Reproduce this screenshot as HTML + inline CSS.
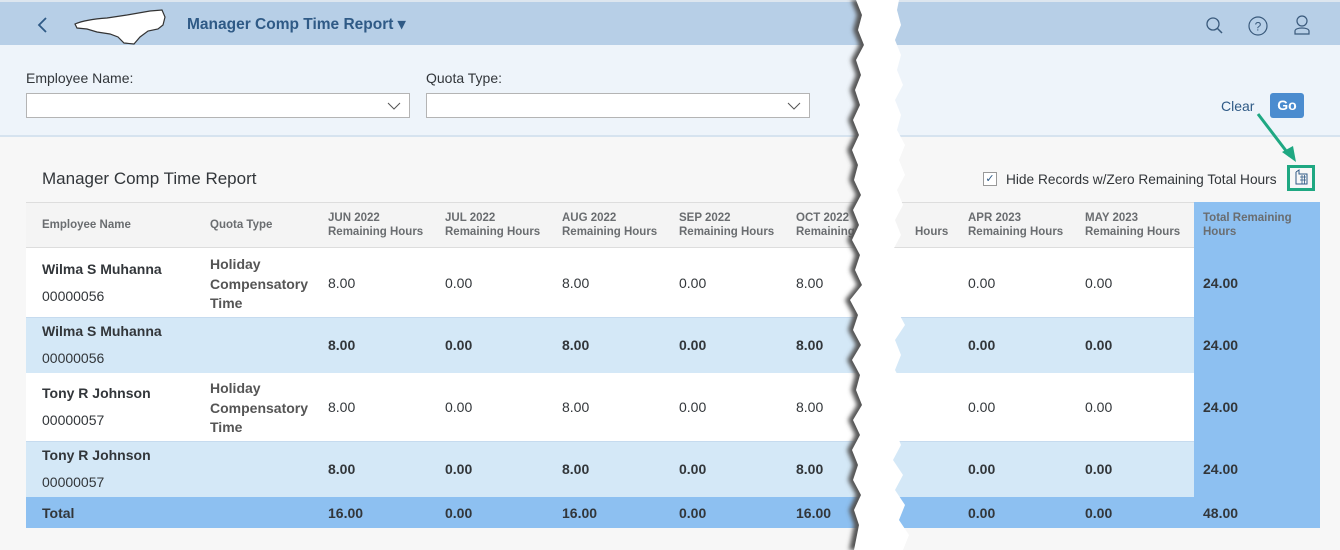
<!DOCTYPE html>
<html><head><meta charset="utf-8"><style>
*{box-sizing:border-box;margin:0;padding:0}
body{width:1340px;height:550px;overflow:hidden;background:#f7f7f7;font-family:"Liberation Sans",sans-serif;position:relative;color:#32363a}
.hdr{position:absolute;left:0;top:0;width:1340px;height:45px;background:#b7cfe7;border-top:2px solid #dde6ef}
.flt{position:absolute;left:0;top:45px;width:1340px;height:92px;background:#eef4fa;border-bottom:2px solid #d6e3ef}
.lbl{position:absolute;font-size:14px;color:#32363a}
.inp{position:absolute;height:25px;background:#fff;border:1px solid #b4b4b4}
.t{position:absolute;font-size:14px}
.b{font-weight:bold}
.h{position:absolute;font-size:11.5px;font-weight:bold;color:#6a6d70;line-height:14px}
.row{position:absolute;left:26px;width:1294px}
</style></head><body>
<div class="hdr">
<svg style="position:absolute;left:36px;top:14px" width="14" height="18"><path d="M10 2 L3 9 L10 16" stroke="#2f5a86" stroke-width="1.8" fill="none"/></svg>
<svg style="position:absolute;left:72px;top:5px" width="95" height="40"><path d="M3 17 C10 14 20 12 35 11 L55 8 L78 4 L90 3 L93 10 L91 18 L86 22 L76 24 L68 30 L62 37 L52 36 L46 30 L38 27 L25 25 L15 22 L5 21 Z" fill="#fff" stroke="#333" stroke-width="1.2"/></svg>
<div class="t b" style="left:187px;top:13px;font-size:15.5px;color:#2f5a86">Manager Comp Time Report ▾</div>
<svg style="position:absolute;left:1205px;top:14px" width="20" height="20"><circle cx="8" cy="8" r="6" stroke="#3a5a7c" stroke-width="1.3" fill="none"/><path d="M12.5 12.5 L17 17" stroke="#3a5a7c" stroke-width="1.5"/></svg>
<svg style="position:absolute;left:1247px;top:13px" width="22" height="22"><circle cx="11" cy="11" r="9" stroke="#3a5a7c" stroke-width="1.2" fill="none"/><text x="11" y="15.5" font-size="12" text-anchor="middle" fill="#3a5a7c" font-family="Liberation Sans">?</text></svg>
<svg style="position:absolute;left:1292px;top:12px" width="20" height="22"><circle cx="10" cy="7" r="5" stroke="#3a5a7c" stroke-width="1.2" fill="none"/><path d="M3 20 L3 17 C3 13 17 13 17 17 L17 20 Z" stroke="#3a5a7c" stroke-width="1.2" fill="none"/></svg>
</div>
<div class="flt">
<div class="lbl" style="left:26px;top:25px">Employee Name:</div>
<div class="inp" style="left:26px;top:48px;width:384px"><svg style="position:absolute;right:8px;top:7px" width="14" height="10"><path d="M1 2 L7 8 L13 2" stroke="#555" fill="none"/></svg></div>
<div class="lbl" style="left:426px;top:25px">Quota Type:</div>
<div class="inp" style="left:426px;top:48px;width:384px"><svg style="position:absolute;right:8px;top:7px" width="14" height="10"><path d="M1 2 L7 8 L13 2" stroke="#555" fill="none"/></svg></div>
<div class="t" style="left:1221px;top:53px;color:#2f5a86">Clear</div>
<div style="position:absolute;left:1270px;top:48px;width:34px;height:25px;background:#4b8ccf;border-radius:3px;color:#fff;font-weight:bold;font-size:14px;text-align:center;line-height:25px">Go</div>
</div>
<svg style="position:absolute;left:1250px;top:112px" width="70" height="50"><path d="M8 2 L40 44" stroke="#1fa882" stroke-width="3"/><path d="M46 50 L32 40 L43 34 Z" fill="#1fa882"/></svg>
<div class="t" style="left:42px;top:169px;font-size:17px">Manager Comp Time Report</div>
<div style="position:absolute;left:983px;top:172px;width:14px;height:14px;border:1px solid #999;background:#fff;font-size:11px;color:#2f5a86;text-align:center;line-height:12px">✓</div>
<div class="t" style="left:1006px;top:172px;font-size:13.7px">Hide Records w/Zero Remaining Total Hours</div>
<div style="position:absolute;left:1287px;top:165px;width:28px;height:26px;border:3px solid #1fa882"></div>
<svg style="position:absolute;left:1292px;top:169px" width="18" height="18"><path d="M4 3 L4 15 L15 15 L15 5 L7 5 L7 1 L4 3" stroke="#2f5a86" fill="none"/><path d="M8 8 H14 M8 11 H14 M10 6 V15 M12.5 6 V15" stroke="#2f5a86" stroke-width="0.8"/></svg>
<!-- table -->
<div class="row" style="top:202px;height:46px;background:#f4f4f4;border-top:1px solid #ddd;border-bottom:1px solid #ddd"></div>
<div class="row" style="top:248px;height:69px;background:#fff"></div>
<div class="row" style="top:317px;height:56px;background:#d4e8f7;border-top:1px solid #c6dbef"></div>
<div class="row" style="top:373px;height:68px;background:#fff"></div>
<div class="row" style="top:441px;height:56px;background:#d4e8f7;border-top:1px solid #c6dbef"></div>
<div class="row" style="top:497px;height:31px;background:#8dc0f1"></div>
<div style="position:absolute;left:1194px;top:202px;width:126px;height:295px;background:#8dc0f1"></div>
<div class="h" style="left:42px;top:218px">Employee Name</div>
<div class="h" style="left:210px;top:218px">Quota Type</div>
<div class="h" style="left:328px;top:211px">JUN 2022<br>Remaining Hours</div>
<div class="h" style="left:445px;top:211px">JUL 2022<br>Remaining Hours</div>
<div class="h" style="left:562px;top:211px">AUG 2022<br>Remaining Hours</div>
<div class="h" style="left:679px;top:211px">SEP 2022<br>Remaining Hours</div>
<div class="h" style="left:796px;top:211px">OCT 2022<br>Remaining Hours</div>
<div class="h" style="left:915px;top:225px">Hours</div>
<div class="h" style="left:968px;top:211px">APR 2023<br>Remaining Hours</div>
<div class="h" style="left:1085px;top:211px">MAY 2023<br>Remaining Hours</div>
<div class="h" style="left:1203px;top:211px">Total Remaining<br>Hours</div>

<div class="t b" style="left:42px;top:261px">Wilma S Muhanna</div><div class="t" style="left:42px;top:288px">00000056</div>
<div class="t b" style="left:210px;top:255px;line-height:19.5px;color:#555">Holiday<br>Compensatory<br>Time</div>
<div class="t" style="left:328px;top:275px">8.00</div><div class="t" style="left:445px;top:275px">0.00</div><div class="t" style="left:562px;top:275px">8.00</div><div class="t" style="left:679px;top:275px">0.00</div><div class="t" style="left:796px;top:275px">8.00</div><div class="t" style="left:968px;top:275px">0.00</div><div class="t" style="left:1085px;top:275px">0.00</div><div class="t b" style="left:1203px;top:275px">24.00</div>

<div class="t b" style="left:42px;top:323px">Wilma S Muhanna</div><div class="t" style="left:42px;top:350px">00000056</div>
<div class="t b" style="left:328px;top:337px">8.00</div><div class="t b" style="left:445px;top:337px">0.00</div><div class="t b" style="left:562px;top:337px">8.00</div><div class="t b" style="left:679px;top:337px">0.00</div><div class="t b" style="left:796px;top:337px">8.00</div><div class="t b" style="left:968px;top:337px">0.00</div><div class="t b" style="left:1085px;top:337px">0.00</div><div class="t b" style="left:1203px;top:337px">24.00</div>

<div class="t b" style="left:42px;top:385px">Tony R Johnson</div><div class="t" style="left:42px;top:412px">00000057</div>
<div class="t b" style="left:210px;top:379px;line-height:19.5px;color:#555">Holiday<br>Compensatory<br>Time</div>
<div class="t" style="left:328px;top:399px">8.00</div><div class="t" style="left:445px;top:399px">0.00</div><div class="t" style="left:562px;top:399px">8.00</div><div class="t" style="left:679px;top:399px">0.00</div><div class="t" style="left:796px;top:399px">8.00</div><div class="t" style="left:968px;top:399px">0.00</div><div class="t" style="left:1085px;top:399px">0.00</div><div class="t b" style="left:1203px;top:399px">24.00</div>

<div class="t b" style="left:42px;top:447px">Tony R Johnson</div><div class="t" style="left:42px;top:474px">00000057</div>
<div class="t b" style="left:328px;top:461px">8.00</div><div class="t b" style="left:445px;top:461px">0.00</div><div class="t b" style="left:562px;top:461px">8.00</div><div class="t b" style="left:679px;top:461px">0.00</div><div class="t b" style="left:796px;top:461px">8.00</div><div class="t b" style="left:968px;top:461px">0.00</div><div class="t b" style="left:1085px;top:461px">0.00</div><div class="t b" style="left:1203px;top:461px">24.00</div>

<div class="t b" style="left:42px;top:505px">Total</div>
<div class="t b" style="left:328px;top:505px">16.00</div><div class="t b" style="left:445px;top:505px">0.00</div><div class="t b" style="left:562px;top:505px">16.00</div><div class="t b" style="left:679px;top:505px">0.00</div><div class="t b" style="left:796px;top:505px">16.00</div><div class="t b" style="left:968px;top:505px">0.00</div><div class="t b" style="left:1085px;top:505px">0.00</div><div class="t b" style="left:1203px;top:505px">48.00</div>

<svg style="position:absolute;left:825px;top:0" width="100" height="550">
<defs><filter id="f" x="-50%" y="0" width="200%" height="100%"><feGaussianBlur stdDeviation="2"/></filter></defs>
<path d="M26 0 L32 15 L28 30 L34 45 L26 60 L31 75 L25 90 L30 105 L23 120 L29 135 L22 150 L28 165 L24 180 L31 195 L23 210 L29 225 L22 240 L30 255 L25 270 L32 285 L20 300 L28 315 L23 330 L31 345 L22 360 L30 375 L26 390 L32 405 L23 420 L30 435 L22 450 L28 465 L23 480 L31 495 L24 510 L29 525 L24 550 L42 550 L42 0 Z" fill="#555" filter="url(#f)"/>
<path d="M31 0 L37 15 L33 30 L39 45 L31 60 L36 75 L30 90 L35 105 L28 120 L34 135 L27 150 L33 165 L29 180 L36 195 L28 210 L34 225 L27 240 L35 255 L30 270 L37 285 L25 300 L33 315 L28 330 L36 345 L27 360 L35 375 L31 390 L37 405 L28 420 L35 435 L27 450 L33 465 L28 480 L36 495 L29 510 L34 525 L29 550 L78 550 L84 535 L74 520 L80 505 L70 490 L78 475 L68 460 L76 445 L70 430 L80 415 L72 400 L78 385 L70 370 L76 355 L70 340 L80 325 L72 310 L78 295 L70 280 L76 265 L68 250 L76 235 L70 220 L78 205 L72 190 L80 175 L74 160 L80 145 L72 130 L76 115 L70 100 L78 85 L72 70 L76 55 L70 40 L76 25 L72 10 L74 0 Z" fill="#fff"/>
</svg>
</body></html>
